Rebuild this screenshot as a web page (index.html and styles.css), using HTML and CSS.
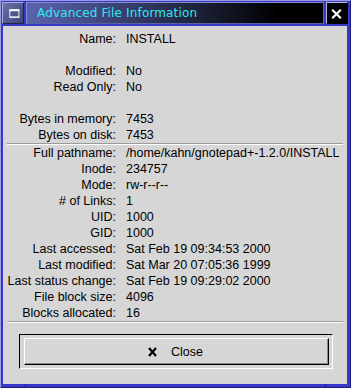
FILE: index.html
```html
<!DOCTYPE html>
<html>
<head>
<meta charset="utf-8">
<link rel="stylesheet" href="styles.css">
</head>
<body>
<div class="win">
  <div class="titlebar">
    <div class="menu-btn">
      <svg width="22" height="22" viewBox="0 0 22 22"><rect x="7.5" y="7.5" width="10" height="8" fill="none" stroke="#fff" stroke-width="1"/><rect x="7" y="7" width="11" height="2" fill="#fff"/><rect x="7" y="15" width="11" height="1.2" fill="#fff"/></svg>
    </div>
    <div class="title">Advanced File Information</div>
    <div class="close-btn">
      <svg width="22" height="22" viewBox="0 0 22 22"><path d="M6.5 7.5 L15.5 16.5 M15.5 7.5 L6.5 16.5" stroke="#fff" stroke-width="2.2" fill="none"/></svg>
    </div>
  </div>
  <div class="body">
    <div class="grid">
      <div class="lbl">Name:</div><div class="val">INSTALL</div>
      <div class="lbl"></div><div class="val"></div>
      <div class="lbl">Modified:</div><div class="val">No</div>
      <div class="lbl">Read Only:</div><div class="val">No</div>
      <div class="lbl"></div><div class="val"></div>
      <div class="lbl">Bytes in memory:</div><div class="val">7453</div>
      <div class="lbl">Bytes on disk:</div><div class="val">7453</div>
    </div>
    <div class="sep"></div>
    <div class="grid">
      <div class="lbl">Full pathname:</div><div class="val">/home/kahn/gnotepad+-1.2.0/INSTALL</div>
      <div class="lbl">Inode:</div><div class="val">234757</div>
      <div class="lbl">Mode:</div><div class="val">rw-r--r--</div>
      <div class="lbl"># of Links:</div><div class="val">1</div>
      <div class="lbl">UID:</div><div class="val">1000</div>
      <div class="lbl">GID:</div><div class="val">1000</div>
      <div class="lbl">Last accessed:</div><div class="val">Sat Feb 19 09:34:53 2000</div>
      <div class="lbl">Last modified:</div><div class="val">Sat Mar 20 07:05:36 1999</div>
      <div class="lbl">Last status change:</div><div class="val">Sat Feb 19 09:29:02 2000</div>
      <div class="lbl">File block size:</div><div class="val">4096</div>
      <div class="lbl">Blocks allocated:</div><div class="val">16</div>
    </div>
    <div class="sep"></div>
    <div class="actions">
      <div class="default-frame">
        <div class="button">
          <svg class="x-icon" width="9" height="10" viewBox="0 0 9 10"><path d="M1 1 L8 9 M8 1 L1 9" stroke="#000" stroke-width="2.2" fill="none"/></svg>
          <span>Close</span>
        </div>
      </div>
    </div>
  </div>
  <div class="tick tick-bl"></div>
  <div class="tick tick-br"></div>
  <div class="tick tick-tr"></div>
</div>
</body>
</html>
```

FILE: styles.css
```css
html, body {
  margin: 0;
  padding: 0;
  background: #3838c8;
}
.win {
  position: relative;
  width: 351px;
  height: 388px;
  box-sizing: border-box;
  display: flex;
  flex-direction: column;
  background: #3838c8;
  border: 1px solid;
  border-color: #9a9ae4 #1c1c80 #1c1c80 #9a9ae4;
  padding: 1px 2px 3px 1px;
}
.tick {
  position: absolute;
  width: 1px;
  background: #1c1c80;
}
.tick-bl { left: 24px; bottom: -1px; height: 4px; }
.tick-br { left: 324px; bottom: -1px; height: 4px; }
.tick-tr { left: 325px; top: -1px; height: 3px; background: #9a9ae4; }
.titlebar {
  display: flex;
  height: 22px;
  gap: 2px;
  margin-bottom: 2px;
}
.menu-btn {
  width: 22px;
  height: 22px;
  box-sizing: border-box;
  background: linear-gradient(135deg, #6a72a8, #3e4678);
  border: 1px solid;
  border-color: #a8b0dc #1e2244 #1e2244 #a8b0dc;
  display: flex;
  align-items: center;
  justify-content: center;
}
.menu-btn svg { display: block; }
.title {
  flex: 1;
  box-sizing: border-box;
  border: 1px solid;
  border-color: #8890cc #5a62a0 #5a62a0 #8890cc;
  background: linear-gradient(to right, #5a64ae 0%, #3a4274 30%, #1a1e34 60%, #000 85%);
  color: #30e8f0;
  font-family: "DejaVu Sans", sans-serif;
  font-size: 12px;
  letter-spacing: 0.15px;
  line-height: 20px;
  padding-left: 10px;
  white-space: nowrap;
  overflow: hidden;
}
.close-btn {
  width: 22px;
  height: 22px;
  box-sizing: border-box;
  background: #000;
  border: 1px solid;
  border-color: #b8bce0 #000 #000 #b8bce0;
  display: flex;
  align-items: center;
  justify-content: center;
}
.close-btn svg { display: block; margin: -1px 0 0 -1px; }
.body {
  flex: 1;
  margin: 0 1px;
  background: #d6d6d6;
  padding-top: 5px;
  font-family: "Liberation Sans", Arial, sans-serif;
  font-size: 12.5px;
  color: #000;
  display: flex;
  flex-direction: column;
}
.grid {
  display: grid;
  grid-template-columns: 113px 1fr;
  column-gap: 10px;
  grid-auto-rows: 16px;
  line-height: 16px;
}
.lbl {
  text-align: right;
  white-space: nowrap;
}
.val {
  white-space: nowrap;
}
.sep {
  margin: 0 4px;
  height: 0;
  border-top: 1px solid #9c9c9c;
  border-bottom: 1px solid #ffffff;
}
.actions {
  padding: 11px 0 0 16px;
}
.default-frame {
  width: 314px;
  height: 35px;
  box-sizing: border-box;
  border: 1px solid;
  border-color: #000 #fff #fff #000;
  padding: 3px 3px 3px 4px;
}
.button {
  height: 100%;
  box-sizing: border-box;
  border: 1px solid;
  border-color: #fff #000 #000 #fff;
  box-shadow: inset -1px -1px 0 #8a8a8a;
  background: #d6d6d6;
  display: flex;
  align-items: center;
  justify-content: center;
  gap: 14px;
  padding-right: 2px;
}
.x-icon { display: block; margin-top: 1px; }
```
